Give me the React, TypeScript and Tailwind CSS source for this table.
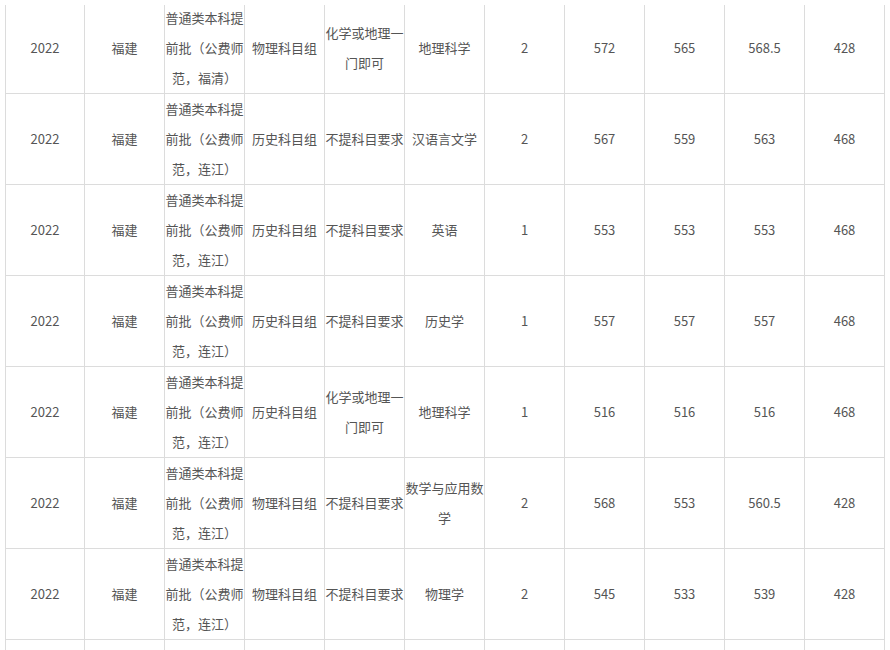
const batch = '普通类本科提前批（公费师范，连江）';

const rows: string[][] = [
  ['2022', '福建', '普通类本科提前批（公费师范，福清）', '物理科目组', '化学或地理一门即可', '地理科学', '2', '572', '565', '568.5', '428'],
  ['2022', '福建', batch, '历史科目组', '不提科目要求', '汉语言文学', '2', '567', '559', '563', '468'],
  ['2022', '福建', batch, '历史科目组', '不提科目要求', '英语', '1', '553', '553', '553', '468'],
  ['2022', '福建', batch, '历史科目组', '不提科目要求', '历史学', '1', '557', '557', '557', '468'],
  ['2022', '福建', batch, '历史科目组', '化学或地理一门即可', '地理科学', '1', '516', '516', '516', '468'],
  ['2022', '福建', batch, '物理科目组', '不提科目要求', '数学与应用数学', '2', '568', '553', '560.5', '428'],
  ['2022', '福建', batch, '物理科目组', '不提科目要求', '物理学', '2', '545', '533', '539', '428'],
  ['', '', '', '', '', '', '', '', '', '', ''],
];

const Row = ({ cells, first }: { cells: string[]; first: boolean }) => (
  <div className="flex">
    {cells.map((text, i) => (
      <div
        key={i}
        className={`w-[80px] ${first ? 'h-[92px]' : 'h-[91px]'} shrink-0 flex items-center justify-center text-center border-r border-b border-[#dcdcdc] ${
          i === 0 ? 'border-l' : ''
        }`}
      >
        <span className="block w-full break-all">{text}</span>
      </div>
    ))}
  </div>
);

export default function App() {
  return (
    <div
      className="w-[890px] h-[650px] bg-white pt-[5px] overflow-hidden text-[13px] leading-[30px] text-[#555]"
      style={{ fontFamily: '"Noto Sans CJK SC", "Noto Sans", sans-serif' }}
    >
      <div className="h-full overflow-hidden pl-[5px]">
        <div className="-mt-[3px]">
          {rows.map((cells, i) => (
            <Row key={i} cells={cells} first={i === 0} />
          ))}
        </div>
      </div>
    </div>
  );
}
